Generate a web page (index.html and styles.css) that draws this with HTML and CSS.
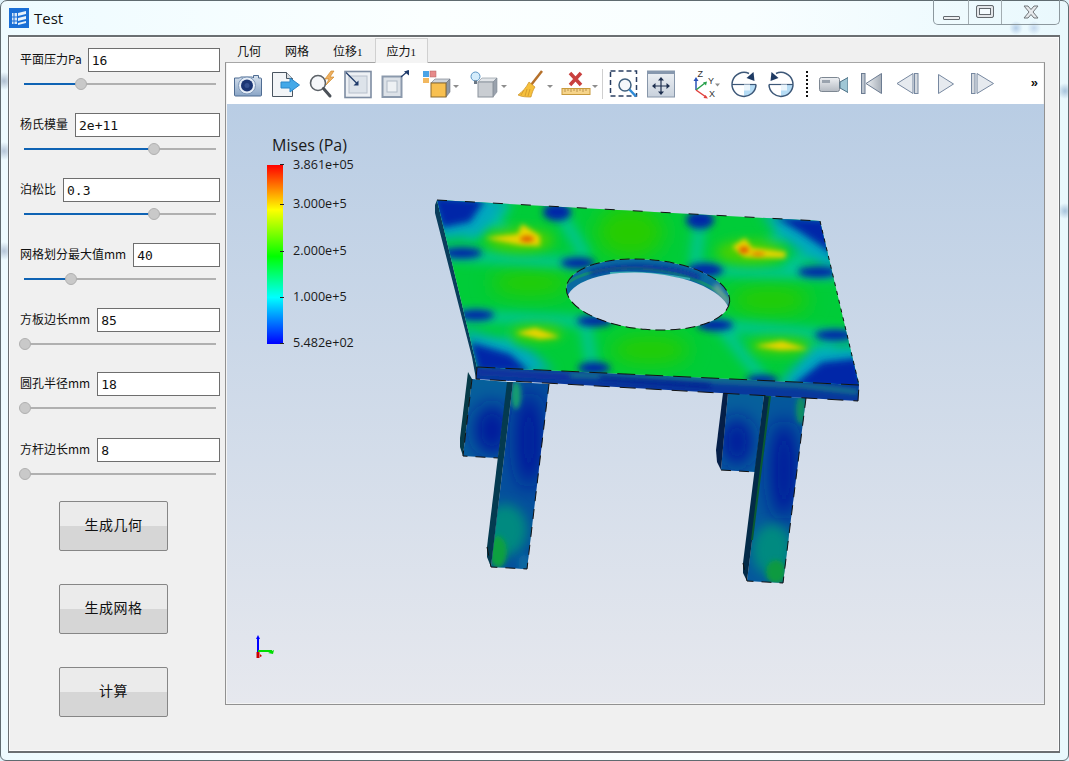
FILE: index.html
```html
<!DOCTYPE html>
<html lang="zh">
<head>
<meta charset="utf-8">
<title>Test</title>
<link rel="stylesheet" href="styles.css">
</head>
<body>
<div class="window">
  <header class="titlebar">
    <svg class="appicon" viewBox="0 0 20 20"><rect width="20" height="20" fill="#1a6fd6"/><path d="M3 5h5v11H3z" fill="#d8e8f8"/><path d="M9 5l8-2v3l-8 2zM9 10l8-2v3l-8 2zM9 15l8-2v2l-8 2z" fill="#e8f2fb"/><path d="M5 5v11M3 9h5M3 13h5" stroke="#1a6fd6"/></svg>
    <span class="title">Test</span>
    <div class="controls">
      <div class="ctl ctl-min"><span class="min-glyph"></span></div>
      <div class="ctl ctl-max"><span class="max-glyph"></span></div>
      <div class="ctl ctl-close"><svg width="16" height="14" viewBox="0 0 16 14"><path d="M1 1h4l3 3.500L11 1h4l-5 6 5 6h-4L8 9.500 5 13H1l5-6z" fill="#e6e9ec" stroke="#6f7478"/></svg></div>
    </div>
  </header>
  <div class="client">
    <aside class="panel">
      <div class="field"><div class="row"><label class="lab-tight">平面压力Pa</label><div class="input">16</div></div><div class="slider" style="--v:29.7%"><i class="fill"></i><i class="knob"></i></div></div>
      <div class="field"><div class="row"><label>杨氏模量</label><div class="input">2e+11</div></div><div class="slider" style="--v:67.7%"><i class="fill"></i><i class="knob"></i></div></div>
      <div class="field"><div class="row"><label>泊松比</label><div class="input">0.3</div></div><div class="slider" style="--v:67.7%"><i class="fill"></i><i class="knob"></i></div></div>
      <div class="field"><div class="row"><label>网格划分最大值mm</label><div class="input">40</div></div><div class="slider" style="--v:24.500%"><i class="fill"></i><i class="knob"></i></div></div>
      <div class="field field-short"><div class="row"><label>方板边长mm</label><div class="input">85</div></div><div class="slider" style="--v:0.5%"><i class="fill"></i><i class="knob"></i></div></div>
      <div class="field field-long"><div class="row"><label>圆孔半径mm</label><div class="input">18</div></div><div class="slider" style="--v:0.5%"><i class="fill"></i><i class="knob"></i></div></div>
      <div class="field field-last"><div class="row"><label>方杆边长mm</label><div class="input">8</div></div><div class="slider" style="--v:0.5%"><i class="fill"></i><i class="knob"></i></div></div>
      <div class="actions">
        <button class="btn">生成几何</button>
        <button class="btn">生成网格</button>
        <button class="btn">计算</button>
      </div>
    </aside>
    <main class="tabs">
      <nav class="tabbar">
        <span class="tab">几何</span>
        <span class="tab">网格</span>
        <span class="tab">位移<small>1</small></span>
        <span class="tab tab-on">应力<small>1</small></span>
      </nav>
      <section class="pane">
        <div class="toolbar">
          <svg class="ic" viewBox="0 0 30 30"><defs><linearGradient id="gc" x1="0" y1="0" x2="0" y2="1"><stop offset="0" stop-color="#d7e2ee"/><stop offset="1" stop-color="#8aa5c6"/></linearGradient></defs><path d="M1.500 8h5l1-1h12l1 1V5.500h5V8h2a1 1 0 0 1 1 1v16a1 1 0 0 1-1 1H2.500a1 1 0 0 1-1-1z" fill="url(#gc)" stroke="#4f6c92"/><circle cx="14" cy="15.500" r="8.500" fill="#e6eef7" stroke="#7e97b8"/><circle cx="14" cy="15.500" r="6" fill="#1c3674"/><circle cx="14" cy="15.500" r="2.500" fill="#34508f"/></svg>
          <svg class="ic m8" viewBox="0 0 30 30"><path d="M1.500 2.500h14l6 6v18h-20z" fill="#f3f5f7" stroke="#4a5560"/><path d="M15.500 2.500v6h6" fill="#d8dce0" stroke="#4a5560"/><path d="M10 12h9V8l9.500 7-9.500 7v-4h-9z" fill="#43a8e8" stroke="#2b86c8"/></svg>
          <svg class="ic m5" viewBox="0 0 30 30"><circle cx="12" cy="13" r="7.500" fill="#f5f7fa" stroke="#5c6268" stroke-width="1.600"/><path d="M17.500 18.500l6.500 7.500" stroke="#4b5158" stroke-width="3" stroke-linecap="round"/><path d="M25 1l-6 8h4l-3 6 8-8h-4l4-6z" fill="#f0b060" stroke="#c8821e" stroke-width=".6"/></svg>
          <svg class="ic m7" viewBox="0 0 30 30"><rect x="2" y="1.500" width="26" height="26" fill="#eef1f5" stroke="#7d8ca2" stroke-width="1.600"/><rect x="6" y="6" width="18" height="17" fill="#dde3ea" stroke="#b7c0cc"/><path d="M3 2.500l11 11" stroke="#1f3a6a" stroke-width="1.200"/><path d="M15.500 15.500v-5l-5 5z" fill="#1f3a6a"/></svg>
          <svg class="ic m7" viewBox="0 0 30 30"><rect x="2.500" y="6.500" width="19" height="20.500" fill="#dde2e8" stroke="#8b99ac" stroke-width="2"/><rect x="7" y="11" width="10" height="11" fill="#eef1f4" stroke="#b0bac6"/><path d="M21 7l7-6" stroke="#1f3a6a" stroke-width="1.200"/><path d="M29 0v5.500l-5-4z" fill="#1f3a6a"/></svg>
          <svg class="ic m12" viewBox="0 0 30 30"><rect x="1" y="1" width="6" height="6" fill="#4aa3e6"/><rect x="8" y="1" width="6" height="6" fill="#e68a8a" stroke="#b06060" stroke-width=".5"/><rect x="1" y="8" width="6" height="5" fill="#f2b860"/><path d="M9 13l4-4h15l-4 4z" fill="#cfd4da" stroke="#6b7480" stroke-width=".6"/><path d="M24 13l4-4v13l-4 5z" fill="#8f98a4" stroke="#6b7480" stroke-width=".6"/><rect x="9" y="13" width="15" height="14" fill="#f8c050" stroke="#8a6a30"/></svg><i class="caret"></i>
          <svg class="ic m11" viewBox="0 0 30 30"><circle cx="5.500" cy="6.500" r="4.500" fill="#d4ecfb" stroke="#5a94c4"/><rect x="4" y="10.500" width="3" height="3.500" fill="#6a7684"/><path d="M8 12l4-4h15l-4 4z" fill="#e2e5e9" stroke="#808a96" stroke-width=".6"/><path d="M23 12l4-4v14l-4 5z" fill="#9aa2ad" stroke="#808a96" stroke-width=".6"/><rect x="8" y="12" width="15" height="15" fill="#c9cdd2" stroke="#8b939d"/></svg><i class="caret"></i>
          <svg class="ic m9" viewBox="0 0 30 30"><path d="M26 1l-11 14" stroke="#b5702a" stroke-width="2.500"/><path d="M13 12l6 5c-2 3-3 6-4 10-4 0-9 0-13-2 4-3 8-7 11-13z" fill="#f6c03c" stroke="#c8912a" stroke-width=".7"/><path d="M8 20l-3 5M11 19l-2 7M14 19l-2 7" stroke="#c8912a" stroke-width=".7"/></svg><i class="caret"></i>
          <svg class="ic m8" viewBox="0 0 30 30"><rect x="1" y="18.500" width="28" height="6" fill="#f6d48a" stroke="#c89a3c"/><path d="M4 19v3M7 19v2M10 19v3M13 19v2M16 19v3M19 19v2M22 19v3M25 19v2" stroke="#a07a30" stroke-width=".7"/><path d="M9 3l11 12M20 3L9 15" stroke="#c9403e" stroke-width="3.500"/></svg><i class="caret"></i>
          <i class="sep"></i>
          <svg class="ic m6" viewBox="0 0 30 30"><rect x="1.500" y="1" width="26" height="25" fill="none" stroke="#2a3f62" stroke-width="1.500" stroke-dasharray="5 3"/><circle cx="16" cy="15" r="6" fill="#f4f7fa" stroke="#3f607f" stroke-width="1.500"/><path d="M20.500 19.500l6.500 7" stroke="#2d8ad6" stroke-width="2.500"/></svg>
          <svg class="ic m7" viewBox="0 0 30 30"><defs><linearGradient id="gm" x1="0" y1="0" x2="0" y2="1"><stop offset="0" stop-color="#eef1f5"/><stop offset="1" stop-color="#c8d1dc"/></linearGradient></defs><rect x="1.500" y="1" width="27" height="26" fill="url(#gm)" stroke="#8897aa"/><rect x="1" y="1" width="28" height="3" fill="#8798ae"/><path d="M15 10v12M9 16h12" stroke="#1e2f4f" stroke-width="1.200"/><path d="M15 7l3 3.500h-6zM15 25l3-3.500h-6zM6 16l3.500-3v6zM24 16l-3.500-3v6z" fill="#1e2f4f"/></svg>
          <svg class="ic m15" viewBox="0 0 30 30"><path d="M5 20V9" stroke="#2a52b8" stroke-width="1.500"/><path d="M5 7l2.500 4h-5z" fill="#2a52b8"/><path d="M5 20l9-7" stroke="#27a04a" stroke-width="1.500"/><path d="M16 11.500l-1 4-3-3z" fill="#27a04a"/><path d="M5 20l10 7" stroke="#e0403c" stroke-width="1.500"/><path d="M17 28.500l-4.500-.500 2-3z" fill="#e0403c"/><text x="6.500" y="7" class="axis">Z</text><text x="17" y="14" class="axis">Y</text><text x="18" y="27" class="axis">X</text><path d="M24 13.500h5l-2.500 3z" fill="#8d8d8d"/></svg>
          <svg class="ic m8" viewBox="0 0 30 30"><path d="M15 14.500h12a12 12 0 0 1-12 12z" fill="#b5dcf5"/><path d="M3 14.500h24" stroke="#3d5878" stroke-width="1.200"/><path d="M15 14.500v6h6v-6" fill="#eaf5fc"/><path d="M20 3.500A12 12 0 1 0 27 14.500" fill="none" stroke="#3d5878" stroke-width="1.500"/><path d="M24.500 2l1 9-8-3z" fill="#1e3a63"/></svg>
          <svg class="ic m7" viewBox="0 0 30 30"><path d="M15 14.500h12a12 12 0 0 1-12 12z" fill="#b5dcf5"/><path d="M3 14.500h24" stroke="#3d5878" stroke-width="1.200"/><path d="M15 14.500v6h6v-6" fill="#eaf5fc"/><path d="M10 3.500A12 12 0 1 1 3 14.500" fill="none" stroke="#3d5878" stroke-width="1.500"/><path d="M5.500 2l-1 9 8-3z" fill="#1e3a63"/></svg>
          <i class="dots"></i>
          <svg class="ic m10" viewBox="0 0 30 30"><defs><linearGradient id="gv" x1="0" y1="0" x2="0" y2="1"><stop offset="0" stop-color="#eef0f3"/><stop offset="1" stop-color="#b4bac2"/></linearGradient></defs><rect x="1.500" y="7.500" width="20" height="14" rx="2" fill="url(#gv)" stroke="#7d8792"/><rect x="4" y="10" width="8" height="3" fill="#9aa3ae"/><path d="M22 12l8-4.500v15L22 18z" fill="#9fc7d6" stroke="#4c6f84"/></svg>
          <svg class="ic m8" viewBox="0 0 30 30"><defs><linearGradient id="gt" x1="0" y1="0" x2="1" y2="0"><stop offset="0" stop-color="#eef1f4"/><stop offset="1" stop-color="#a6aeb8"/></linearGradient></defs><rect x="5.500" y="3.500" width="3.500" height="20" fill="#bcc4ce" stroke="#6c7c92"/><path d="M25.500 3.500v20L10 13.500z" fill="url(#gt)" stroke="#6c7c92"/></svg>
          <svg class="ic m7" viewBox="0 0 30 30"><path d="M20 3.500v20L4 13.500z" fill="#e6eaef" stroke="#7788a0"/><rect x="21.500" y="3.500" width="3.500" height="20" fill="#d5dae0" stroke="#7788a0"/></svg>
          <svg class="ic m8" viewBox="0 0 30 30"><path d="M7.500 4.500v19l15-9.500z" fill="#e6eaef" stroke="#7788a0"/></svg>
          <svg class="ic m6" viewBox="0 0 30 30"><rect x="4.500" y="3.500" width="3.500" height="20" fill="#d5dae0" stroke="#7788a0"/><path d="M10 3.500v20l16.500-10z" fill="#e6eaef" stroke="#7788a0"/></svg>
          <span class="more">»</span>
        </div>
        <div class="viewport">
          <svg class="scene" viewBox="227 104 817 599">
            <defs>
              <filter id="b3" x="-50%" y="-50%" width="200%" height="200%"><feGaussianBlur stdDeviation="2.500"/></filter>
              <filter id="b4" x="-50%" y="-50%" width="200%" height="200%"><feGaussianBlur stdDeviation="3.500"/></filter>
              <filter id="b6" x="-50%" y="-50%" width="200%" height="200%"><feGaussianBlur stdDeviation="6"/></filter>
              <filter id="b10" x="-60%" y="-60%" width="220%" height="220%"><feGaussianBlur stdDeviation="10"/></filter>
              <linearGradient id="rainbow" x1="0" y1="0" x2="0" y2="1"><stop offset="0" stop-color="#f00"/><stop offset=".25" stop-color="#ff0"/><stop offset=".51" stop-color="#0f0"/><stop offset=".74" stop-color="#0ff"/><stop offset="1" stop-color="#00f"/></linearGradient>
              <clipPath id="topClip"><path d="M437 200L820 221 859 385 477 367z"/></clipPath>
              <mask id="plateMask" maskUnits="userSpaceOnUse" x="420" y="190" width="450" height="200"><rect x="420" y="190" width="450" height="200" fill="#fff"/><ellipse cx="648" cy="294.500" rx="82" ry="35" transform="rotate(5 648 294.500)" fill="#000"/></mask>
              <mask id="wallMask" maskUnits="userSpaceOnUse" x="540" y="240" width="210" height="110"><ellipse cx="648" cy="294.500" rx="82" ry="35" transform="rotate(5 648 294.500)" fill="#fff"/><ellipse cx="648" cy="308" rx="82" ry="35" transform="rotate(5 648 308)" fill="#000"/></mask>
              <clipPath id="frontClip"><path d="M477 367L859 385 858 401 476 379z"/></clipPath>
              <clipPath id="leg1"><path d="M472 379L508 382 498 458 463 456z"/></clipPath>
              <clipPath id="leg2"><path d="M513 382L549 384 527 569 491 567z"/></clipPath>
              <clipPath id="leg3"><path d="M728 393L764 395 755 472 721 470z"/></clipPath>
              <clipPath id="leg4"><path d="M770 396L806 398 783 583 747 581z"/></clipPath>
            </defs>

            <!-- back legs -->
            <g clip-path="url(#leg1)"><rect x="455" y="370" width="60" height="95" fill="#06609c"/><ellipse cx="492" cy="430" rx="18" ry="26" fill="#00129c" filter="url(#b10)"/></g>
            <path d="M468 372L472 379 463 456 460 447 460 438z" fill="#063a48"/>
            <path d="M472 379L463 456 498 458" fill="none" stroke="#111" stroke-dasharray="10 8"/>
            <g clip-path="url(#leg3)"><rect x="715" y="385" width="60" height="95" fill="#06609c"/><ellipse cx="737" cy="442" rx="16" ry="25" fill="#00129c" filter="url(#b10)"/></g>
            <path d="M723 393L728 393 721 470 717 462 716 450z" fill="#051f48"/>
            <path d="M721 470L755 472" fill="none" stroke="#111" stroke-dasharray="10 8"/>

            <!-- front legs -->
            <g clip-path="url(#leg2)"><rect x="485" y="378" width="70" height="195" fill="#04509c"/><ellipse cx="529" cy="440" rx="13" ry="48" fill="#00129c" filter="url(#b10)"/><ellipse cx="516" cy="395" rx="5" ry="14" fill="#18a070" filter="url(#b3)"/><ellipse cx="505" cy="530" rx="22" ry="26" fill="#048a80" filter="url(#b6)"/><ellipse cx="498" cy="552" rx="9" ry="16" fill="#0aa040" filter="url(#b3)"/><ellipse cx="524" cy="564" rx="6" ry="10" fill="#0868a0" filter="url(#b3)"/></g>
            <path d="M507 382L513 382 491 567 487 557 487 547z" fill="#043a50"/>
            <path d="M549 384L527 569 491 567 487 547" fill="none" stroke="#111" stroke-dasharray="10 8"/>
            <g clip-path="url(#leg4)"><rect x="740" y="390" width="75" height="200" fill="#04589c"/><ellipse cx="784" cy="470" rx="14" ry="50" fill="#00129c" filter="url(#b10)"/><ellipse cx="801" cy="410" rx="5" ry="14" fill="#109060" filter="url(#b3)"/><ellipse cx="772" cy="550" rx="20" ry="26" fill="#048a80" filter="url(#b6)"/><ellipse cx="776" cy="572" rx="10" ry="12" fill="#0a9a40" filter="url(#b3)"/></g>
            <path d="M764 395L770 396 747 581 743 573 743 563z" fill="#032a48"/>
            <path d="M764 395L770 396 752 540" fill="none" stroke="#0a5a30" stroke-width="2"/>
            <path d="M806 398L783 583 747 581 743 563" fill="none" stroke="#111" stroke-dasharray="10 8"/>

            <!-- plate side and front -->
            <path d="M437 200L477 367 476 379 472 357 435 213 435 205z" fill="#0a3d5c"/>
            <g clip-path="url(#frontClip)">
              <rect x="470" y="360" width="395" height="45" fill="#08389c"/>
              <path d="M480 372L640 377 800 385 858 392" stroke="#14808a" stroke-width="4" fill="none" filter="url(#b3)"/>
              <path d="M600 378L710 386" stroke="#001c90" stroke-width="4" fill="none" filter="url(#b3)"/>
              <path d="M650 372L760 378" stroke="#08a878" stroke-width="3" fill="none" filter="url(#b3)"/>
              <path d="M477 372L570 377" stroke="#0a2ca0" stroke-width="7" fill="none" filter="url(#b3)"/>
            </g>
            <path d="M477 367L476 379 858 401 859 385" fill="none" stroke="#111" stroke-dasharray="16 10"/>

            <!-- hole wall -->
            <g mask="url(#wallMask)">
              <rect x="560" y="250" width="180" height="90" fill="#0a6aa0"/>
              <path d="M565 285C590 262 680 258 730 300" fill="none" stroke="#118a78" stroke-width="3"/>
              <path d="M590 273C630 262 680 268 700 278" fill="none" stroke="#0a2f98" stroke-width="5" filter="url(#b3)"/>
              <path d="M715 285L728 305" stroke="#6aa09a" stroke-width="7" filter="url(#b3)"/>
              <path d="M610 270C640 268 670 272 690 276" stroke="#36a8b0" stroke-width="2" fill="none" transform="translate(0 3)"/>
            </g>

            <!-- plate top -->
            <g mask="url(#plateMask)">
              <g clip-path="url(#topClip)">
                <rect x="420" y="190" width="450" height="200" fill="#00cc38"/>
                <g filter="url(#b10)" fill="#28cc00">
                  <ellipse cx="630" cy="232" rx="34" ry="26"/>
                  <ellipse cx="530" cy="283" rx="40" ry="13"/>
                  <ellipse cx="770" cy="300" rx="40" ry="14"/>
                  <ellipse cx="650" cy="350" rx="40" ry="14"/>
                </g>
                <g filter="url(#b6)" fill="none" stroke="#00c4a0" stroke-width="10" stroke-linecap="round">
                  <path d="M440 254L575 263"/>
                  <path d="M450 315L590 322"/>
                  <path d="M700 270L835 274"/>
                  <path d="M715 325L850 337"/>
                  <path d="M480 205L505 232M505 207L470 235"/>
                  <path d="M557 208L585 255"/>
                  <path d="M700 222L695 265"/>
                  <path d="M790 226L770 245M820 245L790 265"/>
                  <path d="M592 366L585 322"/>
                  <path d="M762 378L722 328"/>
                  <path d="M490 365L510 340M530 370L490 345"/>
                  <path d="M805 380L830 345M855 370L810 350"/>
                </g>
                <g filter="url(#b6)" fill="#00a8c0">
                  <path d="M430 195L510 200 480 235 440 240z"/>
                  <path d="M760 214L830 218 838 275 790 245z"/>
                  <path d="M480 372L462 328 530 350 555 372z"/>
                  <path d="M865 392L858 345 810 350 775 388z"/>
                </g>
                <g filter="url(#b4)" fill="#0628a8">
                  <path d="M432 196L485 200 470 222 442 228z"/>
                  <path d="M775 217L826 219 834 255 800 232z"/>
                  <path d="M478 372L470 342 510 354 530 372z"/>
                  <path d="M864 392L858 358 822 362 792 386z"/>
                  <ellipse cx="557" cy="212" rx="14" ry="9"/>
                  <ellipse cx="700" cy="220" rx="14" ry="9"/>
                  <ellipse cx="462" cy="253" rx="20" ry="5.500"/>
                  <ellipse cx="476" cy="315" rx="18" ry="5.500"/>
                  <ellipse cx="818" cy="272" rx="20" ry="5.500"/>
                  <ellipse cx="835" cy="335" rx="20" ry="5.500"/>
                  <ellipse cx="578" cy="263" rx="17" ry="5.500"/>
                  <ellipse cx="705" cy="270" rx="18" ry="7"/>
                  <ellipse cx="595" cy="321" rx="18" ry="5.500"/>
                  <ellipse cx="715" cy="325" rx="18" ry="6"/>
                  <ellipse cx="594" cy="368" rx="16" ry="6"/>
                  <ellipse cx="762" cy="380" rx="16" ry="5"/>
                </g>
                <g filter="url(#b6)" fill="#48d000">
                  <ellipse cx="520" cy="240" rx="34" ry="12"/>
                  <ellipse cx="750" cy="252" rx="34" ry="12"/>
                  <ellipse cx="537" cy="333" rx="26" ry="8"/>
                  <ellipse cx="780" cy="346" rx="30" ry="8"/>
                </g>
                <g filter="url(#b3)" fill="#e8d400">
                  <path d="M485 238L518 234 522 224 540 236 540 246 520 245z"/>
                  <path d="M732 247L745 238 752 248 786 252 785 258 745 257z"/>
                  <path d="M516 333L535 328 560 337 540 339z"/>
                  <path d="M755 346L782 341 808 349 780 350z"/>
                </g>
                <g filter="url(#b3)" fill="#e05800">
                  <ellipse cx="527" cy="239" rx="7" ry="3"/>
                  <ellipse cx="744" cy="250" rx="5" ry="3.500"/>
                  <ellipse cx="758" cy="254" rx="7" ry="1.500"/>
                </g>
              </g>
              <path d="M437 200L820 221" fill="none" stroke="#111" stroke-dasharray="10 18"/>
              <path d="M820 221L859 385" fill="none" stroke="#111" stroke-dasharray="4 5"/>
              <path d="M859 385L477 367" fill="none" stroke="#111" stroke-dasharray="18 10"/>
            </g>
            <ellipse cx="648" cy="294.500" rx="82" ry="35" transform="rotate(5 648 294.500)" fill="none" stroke="#111" stroke-dasharray="10 5"/>

            <!-- legend -->
            <text x="309.500" y="151" class="lg-title" text-anchor="middle">Mises (Pa)</text>
            <rect x="267" y="165" width="16" height="179" fill="url(#rainbow)"/>
            <path d="M280 164.500h4M280 204.500h4M280 251.500h4M280 297.500h4M280 343.500h4" stroke="#222"/>
            <text x="293" y="168.500" class="lg">3.861e+05</text>
            <text x="293" y="208" class="lg">3.000e+5</text>
            <text x="293" y="255" class="lg">2.000e+5</text>
            <text x="293" y="301" class="lg">1.000e+5</text>
            <text x="293" y="347" class="lg">5.482e+02</text>

            <!-- orientation axes -->
            <path d="M258 652v-15" stroke="#00f" stroke-width="2"/><path d="M256 639l2-4 2 4z" fill="#00f"/>
            <path d="M258 651h14" stroke="#0d0" stroke-width="2"/><path d="M268 653l6-3-1 4z" fill="#0d0"/>
            <path d="M258 652v6" stroke="#c00" stroke-width="3"/><path d="M260 654l2 2-2 1z" fill="#c00"/>
          </svg>
        </div>
      </section>
    </main>
  </div>
</div>
</body>
</html>
```

FILE: styles.css
```css
* { box-sizing: border-box; }
html, body { margin: 0; padding: 0; height: 100%; background: #dff2fa; overflow: hidden; }
body { font-family: "Noto Sans CJK SC", "Liberation Sans", sans-serif; color: #111; }

.window {
  width: 1069px; height: 761px;
  display: flex; flex-direction: column;
  border: 1px solid #5f6b70;
  border-radius: 7px 7px 6px 6px;
  background:
    radial-gradient(circle at 3px 80px, #aebfd0 0, rgba(174,191,208,0) 9px),
    radial-gradient(circle at 3px 150px, #b5c6d8 0, rgba(174,191,208,0) 9px),
    radial-gradient(circle at 3px 250px, #b5c6d8 0, rgba(174,191,208,0) 9px),
    radial-gradient(circle at 1064px 90px, #a8c4dc 0, rgba(174,191,208,0) 8px),
    radial-gradient(circle at 1064px 210px, #a8c4dc 0, rgba(174,191,208,0) 8px),
    radial-gradient(circle at 1015px 27px, #b4cde8 0, rgba(180,205,232,0) 7px),
    radial-gradient(circle at 1033px 27px, #c4d8ee 0, rgba(180,205,232,0) 7px),
    linear-gradient(90deg, #eefbff 0, #fbffff 40%, #f8feff 70%, #e9f8fd 100%);
}

.titlebar { height: 34px; display: flex; align-items: flex-start; padding-left: 8px; flex: none; }
.appicon { width: 20px; height: 20px; margin-top: 7px; flex: none; }
.title { font-family: "Open Sans", "Liberation Sans", sans-serif; font-size: 15px; line-height: 20px; margin: 7px 0 0 5px; color: #111; }
.controls {
  margin-left: auto; margin-right: 8px; margin-top: -1px;
  display: flex; height: 25px; width: 127px;
  border: 1px solid #8c989e; border-top: 0;
  border-radius: 0 0 5px 5px;
}
.ctl { display: flex; align-items: center; justify-content: center; border-left: 1px solid #a3adb2; }
.ctl:first-child { border-left: 0; }
.ctl-min { width: 34px; }
.ctl-max { width: 33px; }
.ctl-close { flex: 1; }
.min-glyph { width: 17px; height: 4px; background: #eceef0; border: 1px solid #63696e; border-radius: 1px; margin-top: 11px; }
.max-glyph { width: 18px; height: 13px; border: 1px solid #63696e; border-radius: 2px; background: #e3e6e9; display: block; margin-top: -1px; box-shadow: inset 0 0 0 2px #e3e6e9, inset 0 0 0 3px #63696e, inset 0 0 0 9px #f4fbfe; }

.client {
  flex: 1; display: flex;
  margin: 0 8px 7px 7px;
  border: 1px solid #6b6f72;
  border-top-width: 2px; border-bottom-width: 2px;
  background: #f0f0f0;
  box-shadow: inset 0 0 0 1px #fbfbfb;
}

.panel { width: 216px; flex: none; padding: 11px 5px 0 11px; }
.field { height: 65px; }
.field-short { height: 64px; }
.field-long { height: 66px; }
.field-last { height: 63px; }
.row { display: flex; align-items: center; gap: 7px; height: 24px; }
.row label { font-size: 12px; line-height: 20px; white-space: nowrap; margin-top: -3px; }
.row .lab-tight { margin-right: -1px; }
.input {
  flex: 1; min-width: 0; height: 24px;
  border: 1px solid #6e6e6e; background: #fff;
  font: 13px/24px "DejaVu Sans Mono", monospace;
  padding-left: 3px; color: #111;
}
.slider { position: relative; height: 12px; margin: 6px 4px 0; width: 192px; }
.slider::before { content: ""; position: absolute; left: 0; right: 0; top: 5px; height: 2px; background: #b0b0b0; }
.fill { position: absolute; left: 0; top: 5px; height: 2px; width: var(--v); background: #0f63b4; }
.knob { position: absolute; top: 0; left: var(--v); width: 12px; height: 12px; margin-left: -6px; border-radius: 50%; background: #c9c9c9; border: 1px solid #b0b0b0; }

.actions { display: flex; flex-direction: column; gap: 33px; margin: 0 0 0 39px; }
.btn {
  width: 109px; height: 50px; padding: 0 0 5px;
  border: 1px solid #868686; border-radius: 2px;
  background: linear-gradient(#ebebeb 0, #ebebeb 50%, #d6d6d6 50%, #d6d6d6 100%);
  font: 14px/20px "Noto Sans CJK SC", sans-serif; letter-spacing: .5px; color: #111;
}

.tabs { flex: 1; min-width: 0; display: flex; flex-direction: column; margin-right: 14px; padding-top: 1px; }
.tabbar { height: 25px; display: flex; flex: none; padding-left: 0; }
.tab { padding: 0 12px; font-size: 12px; line-height: 25px; height: 25px; color: #111; }
.tab small { font-family: "Liberation Serif", serif; font-size: 11px; margin-left: 0; }
.tab-on { border: 1px solid #d0d0d0; border-bottom: 0; background: #f4f4f4; line-height: 23px; position: relative; z-index: 1; padding: 0 11px; }
.pane { height: 643px; border: 1px solid #919191; border-top-color: #a6a6a6; background: #f4f4f4; display: flex; flex-direction: column; padding: 0 0 1px 1px; margin-top: -1px; }

.toolbar { height: 41px; flex: none; background: #fff; display: flex; align-items: flex-start; padding: 7px 0 0 6px; margin-right: 1px; position: relative; }
.ic { width: 30px; height: 30px; flex: none; display: block; }
.m5 { margin-left: 5px; } .m6 { margin-left: 6px; } .m7 { margin-left: 7px; } .m8 { margin-left: 8px; }
.m9 { margin-left: 9px; } .m10 { margin-left: 10px; } .m11 { margin-left: 11px; } .m12 { margin-left: 12px; } .m15 { margin-left: 15px; }
.caret { width: 0; height: 0; flex: none; margin: 15px 0 0 1px; border: 3px solid transparent; border-top: 3px solid #8d8d8d; border-bottom: 0; display: block; }
.sep { width: 1px; height: 30px; background: #cfcfcf; flex: none; margin: -1px 0 0 4px; }
.dots { width: 2px; height: 28px; flex: none; margin: 1px 0 0 10px; background: repeating-linear-gradient(#111 0, #111 2px, transparent 2px, transparent 4px); }
.more { margin-left: auto; margin-right: 5px; font: bold 13px/26px "Liberation Sans", sans-serif; color: #111; }

.viewport { flex: 1; min-height: 0; background: linear-gradient(#b9cde4 0, #e6e8ee 100%); }
.scene { display: block; width: 100%; height: 100%; }
.axis { font: 9px "Liberation Sans", sans-serif; fill: #333; }
.lg-title { font: 16px "Open Sans", sans-serif; fill: #1a1a1a; }
.lg { font: 12.6px "Open Sans", sans-serif; fill: #1a1a1a; }
```
